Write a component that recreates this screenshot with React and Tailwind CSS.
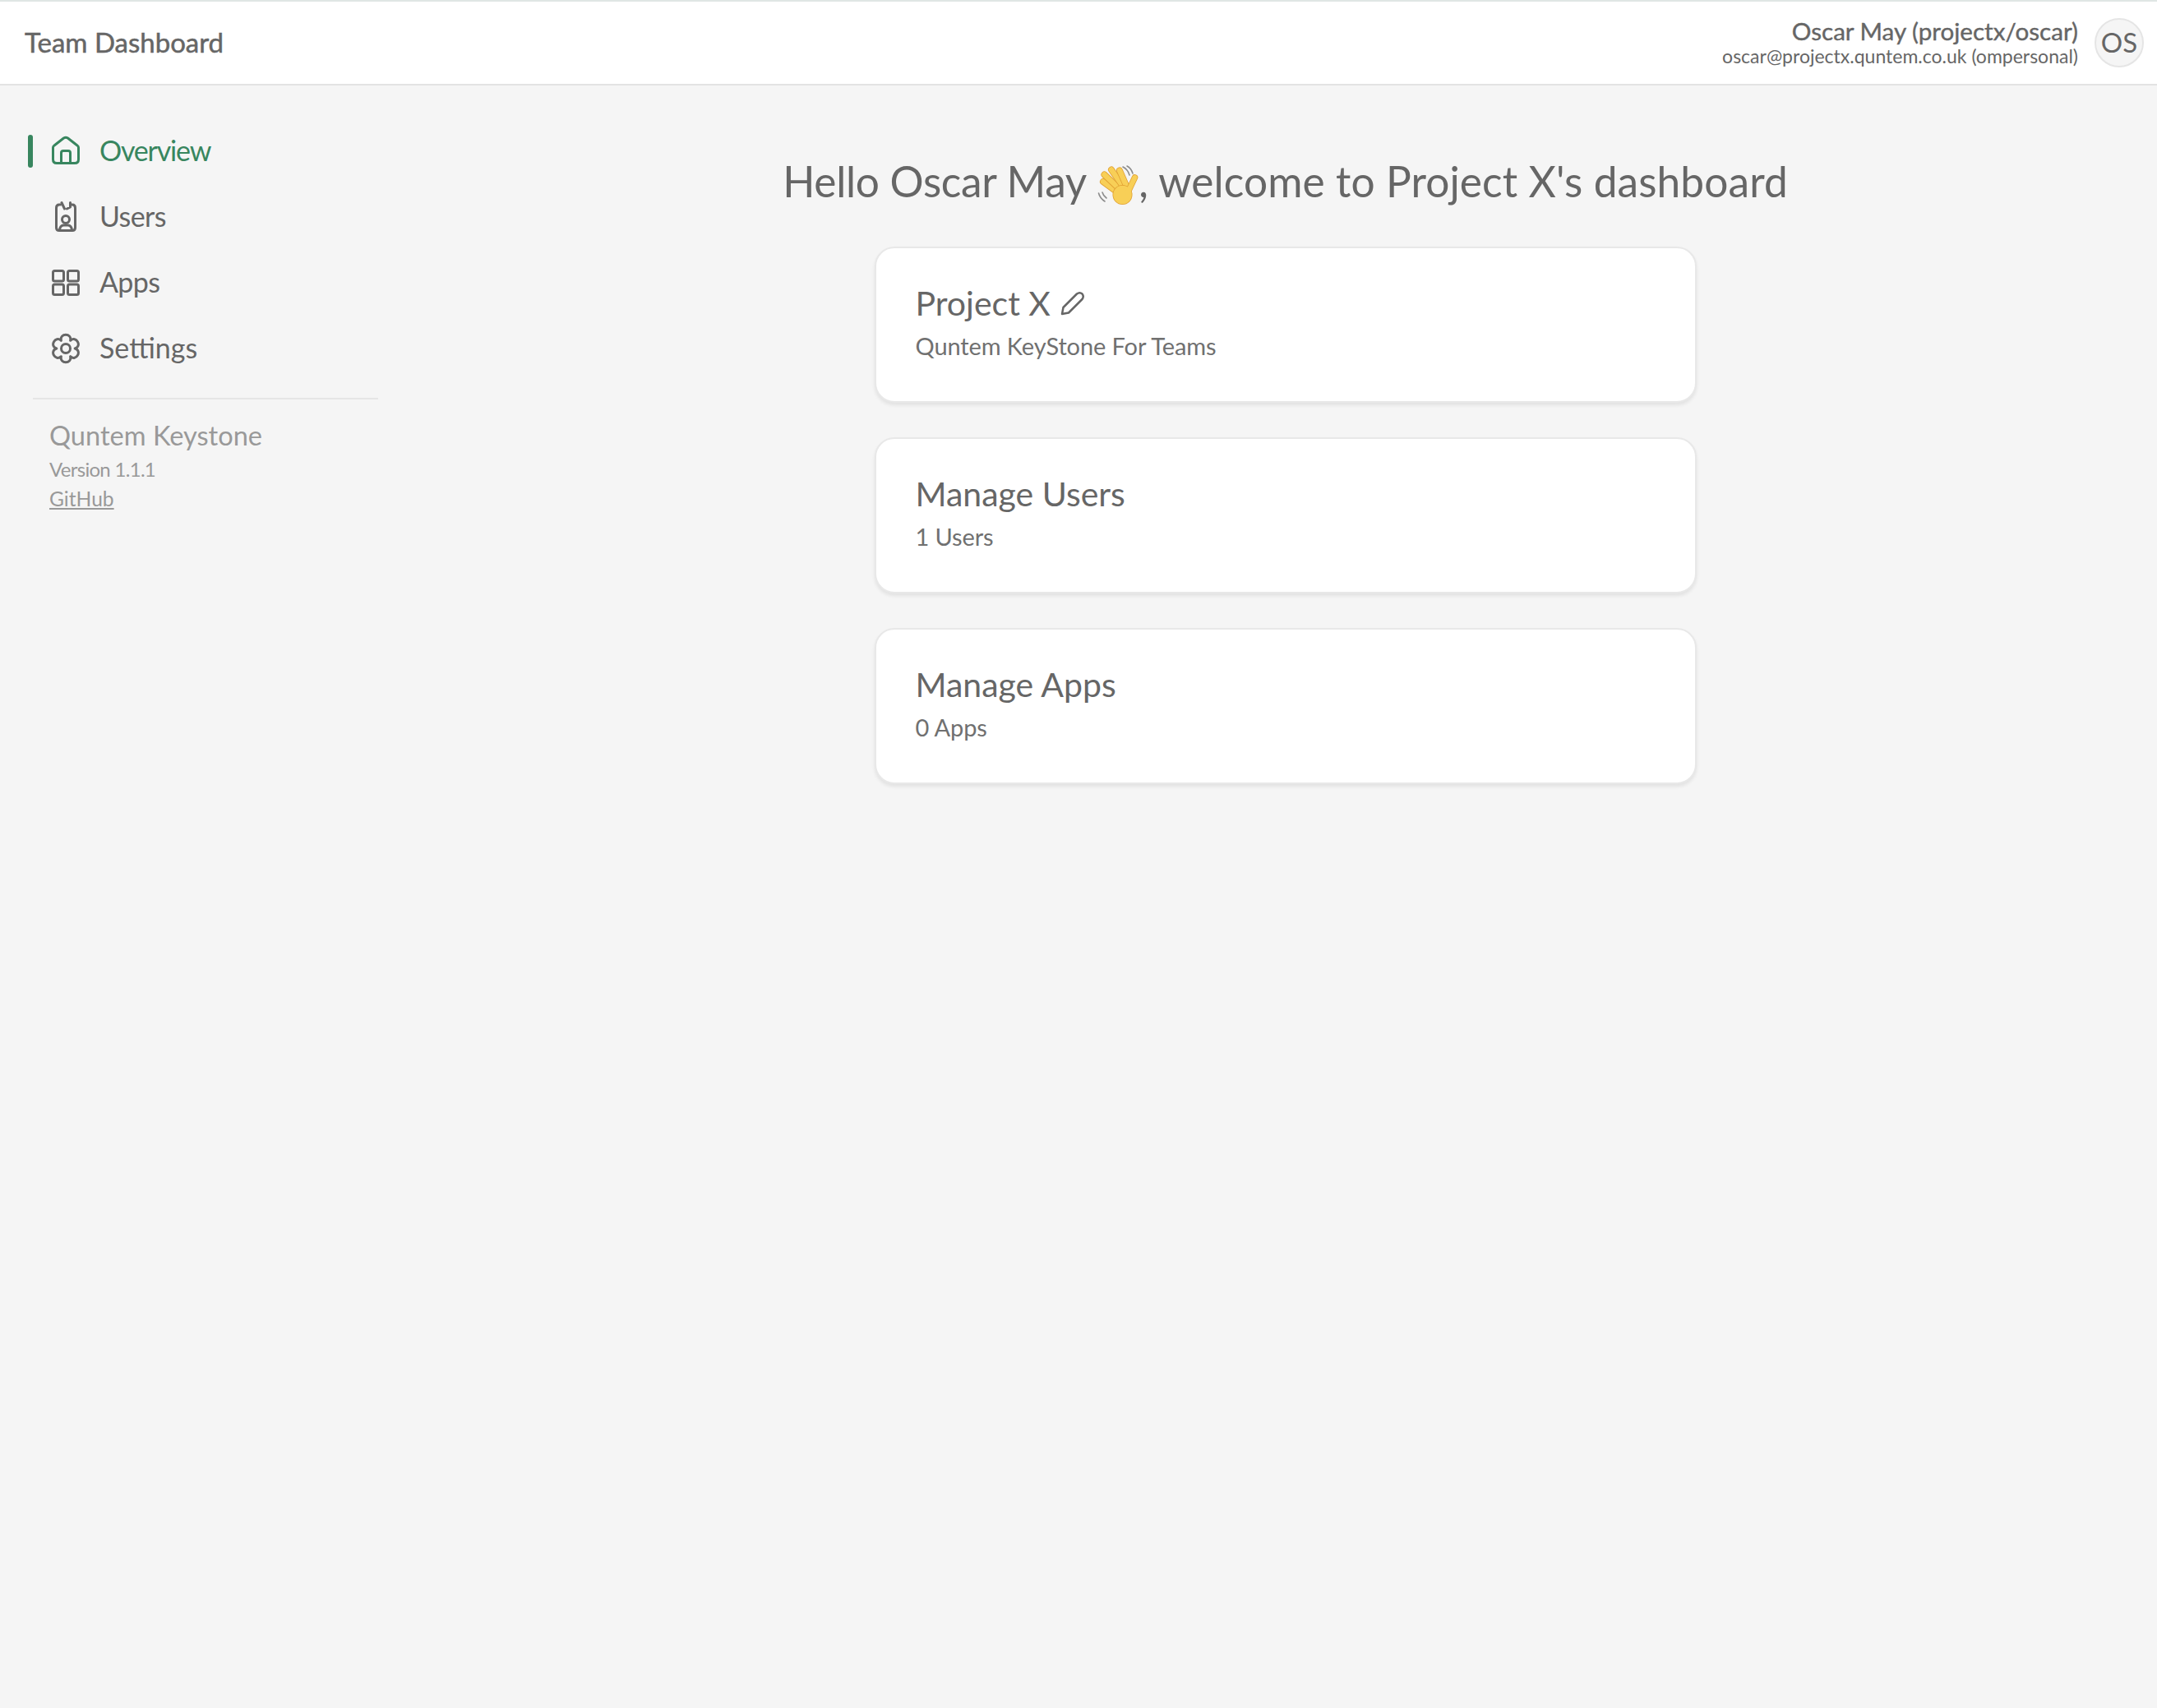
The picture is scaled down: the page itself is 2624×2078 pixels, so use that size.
import React from "react";

const font = "[font-family:Lato,'Liberation_Sans',sans-serif]";

function gearPath() {
  const cx = 17, cy = 20, rv = 11.2, rc = 20.5;
  const pt = (r, deg) => {
    const a = (deg * Math.PI) / 180;
    return `${(cx + r * Math.cos(a)).toFixed(2)} ${(cy + r * Math.sin(a)).toFixed(2)}`;
  };
  let d = `M${pt(rv, -120)}`;
  for (let i = 0; i < 6; i++) {
    const s = -120 + i * 60;
    d += ` C${pt(rc, s + 8)} ${pt(rc, s + 52)} ${pt(rv, s + 60)}`;
  }
  return d + " Z";
}

const iconProps = {
  width: 34,
  height: 40,
  viewBox: "0 0 34 40",
  fill: "none",
  stroke: "currentColor",
  strokeWidth: 3,
  strokeLinecap: "round",
  strokeLinejoin: "round",
};

function HomeIcon() {
  return (
    <svg {...iconProps}>
      <path d="M1.5 15.5 Q1.5 14 3 13 L14.5 4 Q17 2.5 19.5 4 L31 13 Q32.5 14 32.5 15.5 V30 Q32.5 34.5 28 34.5 H6 Q1.5 34.5 1.5 30 Z" />
      <path d="M11.5 34.5 V22 Q11.5 19.5 14 19.5 H20 Q22.5 19.5 22.5 22 V34.5" />
    </svg>
  );
}
function BadgeIcon() {
  return (
    <svg {...iconProps}>
      <path d="M10.5 5 H9 Q5.5 5 5.5 9 V33 Q5.5 36.5 9 36.5 H25 Q28.5 36.5 28.5 33 V9 Q28.5 5 25 5 H23.5" />
      <path d="M12 2.5 L15.5 10 M22.5 2.5 V8 L18.5 10" />
      <circle cx="17" cy="23" r="4.5" />
      <path d="M9.5 36 Q10 30.5 14 30 H20 Q24 30.5 24.5 36" />
    </svg>
  );
}
function GridIcon() {
  return (
    <svg {...iconProps}>
      <rect x="1.5" y="5.5" width="13" height="12.5" rx="2" />
      <rect x="19.5" y="5.5" width="13" height="12.5" rx="2" />
      <rect x="1.5" y="22" width="13" height="12.5" rx="2" />
      <rect x="19.5" y="22" width="13" height="12.5" rx="2" />
    </svg>
  );
}
function GearIcon() {
  return (
    <svg {...iconProps}>
      <path d={gearPath()} />
      <circle cx="17" cy="20" r="5.5" />
    </svg>
  );
}
function PencilIcon() {
  return (
    <svg width="30" height="32" viewBox="0 0 30 32" fill="none" stroke="currentColor" strokeWidth="2.5" strokeLinecap="round" strokeLinejoin="round">
      <path d="M2 29 L3.5 21 L20 4.5 Q23.5 2 26.5 4.5 Q29 7.5 26.5 11 L10 27.5 Z" />
    </svg>
  );
}
function WaveHand() {
  const fingers = [
    "M7 20 L26 34",
    "M8.5 11.5 L28 30",
    "M17 5.5 L32 27",
    "M27 6.5 L36 27",
  ];
  return (
    <svg width="50" height="50" viewBox="0 0 50 50" fill="none" strokeLinecap="round" className="inline-block align-[-11px]">
      {fingers.map((d) => (
        <g key={d}>
          <path d={d} stroke="#e0a032" strokeWidth="8" />
          <path d={d} stroke="#f8cf57" strokeWidth="6.4" />
        </g>
      ))}
      <path d="M45.5 15 L37 33" stroke="#e0a032" strokeWidth="7.6" />
      <circle cx="30.5" cy="36" r="12" fill="#e0a032" />
      <circle cx="30.5" cy="36" r="11.2" fill="#f8cf57" />
      <path d="M45.5 15 L37 33" stroke="#f8cf57" strokeWidth="6" />
      <g stroke="#8c8c8c" strokeWidth="1.6">
        <path d="M31 2 Q37 5 39 12" />
        <path d="M36 1 Q41 3.5 43 10" />
        <path d="M1.5 34 Q3 40 9 44" />
        <path d="M6 33 Q7 37 11 40" />
      </g>
    </svg>
  );
}

function NavItem({ icon, label, active, tracking }) {
  return (
    <a className={`relative flex h-20 items-center pl-[63px] text-[34px] ${active ? "text-[#38865f]" : "text-[#666666]"}`}>
      {active && <span className="absolute left-[34px] top-5 h-10 w-1.5 rounded-full bg-[#38865f]" />}
      {icon}
      <span className={`ml-6 pb-[3px] ${tracking}`}>{label}</span>
    </a>
  );
}

function Card({ title, sub, children }) {
  return (
    <div className="h-[190px] w-[1000px] rounded-[24px] border-2 border-[#e8e8e8] bg-white px-12 pt-[41px] shadow-[0_3px_4px_rgba(0,0,0,0.08)]">
      <div className="flex h-[52px] items-center gap-3 text-[41px] leading-[52px] text-[#666666]">
        {title}
        {children}
      </div>
      <p className="mt-2 text-[29px] leading-9 tracking-[-0.1px] text-[#707070]">{sub}</p>
    </div>
  );
}

export default function App() {
  return (
    <div className={`flex min-h-[2078px] flex-col bg-[#f5f5f5] ${font}`}>
      <header className="flex h-[104px] items-center justify-between border-t-2 border-b-2 border-t-[#dfe6e4] border-b-[#e3e3e3] bg-white pl-[30px] pr-4">
        <h1 className="text-[33px] text-[#666666] [-webkit-text-stroke:0.5px_#666666]">Team Dashboard</h1>
        <div className="flex items-center gap-5">
          <div className="text-right text-[#666666]">
            <p className="text-[29.6px] leading-[34px] [-webkit-text-stroke:0.4px_#666666]">Oscar May (projectx/oscar)</p>
            <p className="pb-[2px] text-[23px] leading-[26px]">oscar@projectx.quntem.co.uk (ompersonal)</p>
          </div>
          <div className="flex h-[60px] w-[60px] items-center justify-center rounded-full border-2 border-[#e5e5e5] bg-[#f5f5f5] text-[33px] text-[#666666]">OS</div>
        </div>
      </header>
      <div className="flex flex-1">
        <aside className="w-[500px] shrink-0 pt-10">
          <nav className="flex flex-col">
            <NavItem active icon={<HomeIcon />} label="Overview" tracking="tracking-[-1.2px]" />
            <NavItem icon={<BadgeIcon />} label="Users" tracking="tracking-[-0.6px]" />
            <NavItem icon={<GridIcon />} label="Apps" tracking="tracking-[-0.6px]" />
            <NavItem icon={<GearIcon />} label="Settings" tracking="tracking-normal" />
          </nav>
          <div className="ml-10 mr-10 mt-5 border-t-2 border-[#e5e5e5] pl-5 pt-[24px] text-[#999999]">
            <p className="text-[32.6px] leading-10">Quntem Keystone</p>
            <p className="mt-[3px] text-[24px] leading-9 tracking-[-0.7px]">Version 1.1.1</p>
            <a className="text-[24.6px] leading-9 underline">GitHub</a>
          </div>
        </aside>
        <main className="flex flex-1 flex-col items-center pl-[3px] pt-[80px]">
          <h2 className="whitespace-nowrap text-[51.4px] leading-[72px] tracking-[0.1px] text-[#666666]">
            <span className="tracking-[-0.3px]">Hello Oscar May</span> <WaveHand />, welcome to Project X's dashboard
          </h2>
          <div className="mt-[44px] flex flex-col gap-[42px]">
            <Card title="Project X" sub="Quntem KeyStone For Teams"><PencilIcon /></Card>
            <Card title="Manage Users" sub="1 Users" />
            <Card title="Manage Apps" sub="0 Apps" />
          </div>
        </main>
      </div>
    </div>
  );
}
